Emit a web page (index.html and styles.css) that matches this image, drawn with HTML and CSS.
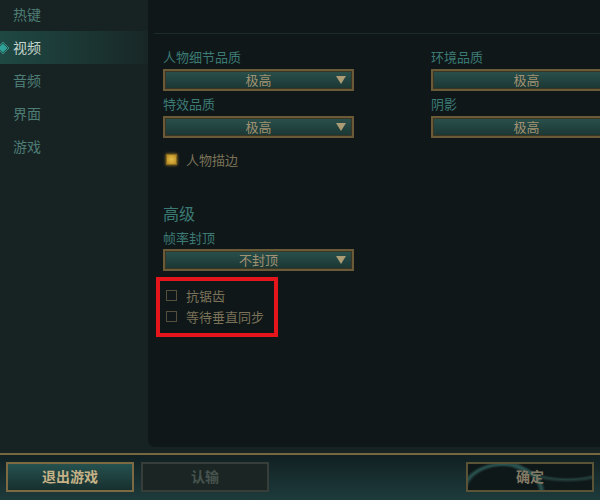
FILE: index.html
```html
<!DOCTYPE html>
<html lang="zh-CN">
<head>
    <meta charset="UTF-8">
    <title>设置 - 视频</title>
    <link rel="stylesheet" href="styles.css">
</head>
<body>
    <div class="tela">
        <!-- menu lateral -->
        <ul class="menu">
            <li class="menu-item">热键</li>
            <li class="menu-item ativo">
                <svg class="marcador" width="10" height="14" viewBox="0 0 10 14">
                    <path d="M-3 7 L3 1 L9 7 L3 13 Z" fill="none" stroke="#3a8a84" stroke-width="1"/>
                    <path d="M-2 7 L3 2.5 L7.5 7 L3 11.5 Z" fill="#2fa397"/>
                </svg>
                视频
            </li>
            <li class="menu-item">音频</li>
            <li class="menu-item">界面</li>
            <li class="menu-item">游戏</li>
        </ul>

        <div class="painel">
            <div class="divisor"></div>

            <div class="colunas">
                <div class="campo">
                    <label class="rotulo">人物细节品质</label>
                    <div class="seletor"><span></span><span class="valor">极高</span><span class="seta"></span></div>
                </div>
                <div class="campo">
                    <label class="rotulo">环境品质</label>
                    <div class="seletor"><span></span><span class="valor">极高</span><span class="seta"></span></div>
                </div>
                <div class="campo">
                    <label class="rotulo">特效品质</label>
                    <div class="seletor"><span></span><span class="valor">极高</span><span class="seta"></span></div>
                </div>
                <div class="campo">
                    <label class="rotulo">阴影</label>
                    <div class="seletor"><span></span><span class="valor">极高</span><span class="seta"></span></div>
                </div>
            </div>

            <div class="opcao contorno">
                <span class="caixa marcada"></span>
                <span>人物描边</span>
            </div>

            <h3 class="titulo">高级</h3>
            <div class="campo campo-avancado">
                <label class="rotulo">帧率封顶</label>
                <div class="seletor"><span></span><span class="valor">不封顶</span><span class="seta"></span></div>
            </div>

            <div class="destaque">
                <div class="opcao">
                    <span class="caixa"></span>
                    <span>抗锯齿</span>
                </div>
                <div class="opcao">
                    <span class="caixa"></span>
                    <span>等待垂直同步</span>
                </div>
            </div>
        </div>
    </div>

    <div class="rodape">
        <button class="botao botao-sair">退出游戏</button>
        <button class="botao botao-desativado">认输</button>
        <button class="botao botao-confirmar">确定</button>
    </div>
</body>
</html>
```

FILE: styles.css
```css
/* base da pagina */
body {
    margin: 0;
    width: 600px;
    height: 500px;
    overflow: hidden;
    background-color: #172223;
    font-family: "Noto Sans CJK SC", "Noto Sans", sans-serif;
    display: flex;
    flex-direction: column;
}

.tela {
    display: flex;
    height: 447px;
    margin-bottom: 6px;
}

/* menu lateral */
.menu {
    list-style: none;
    margin: -2px 0 0 0;
    padding: 0;
    width: 148px;
    flex-shrink: 0;
}

.menu-item {
    height: 33px;
    line-height: 33px;
    padding-left: 13px;
    font-size: 14px;
    color: #4d7d75;
    display: flex;
    align-items: center;
    position: relative;
}

.menu-item.ativo {
    color: #c4d6ce;
    background: linear-gradient(to right, #1f4843 0%, #1c3a37 45%, #182726 100%);
}

.marcador {
    position: absolute;
    left: 0;
    top: 10px;
}

/* painel principal */
.painel {
    flex: 1;
    background-color: #0f1719;
    border-bottom-left-radius: 7px;
    overflow: hidden;
    padding-left: 15px;
}

.divisor {
    height: 1px;
    margin: 33px 0 0 -9px;
    background-color: #1b2a2a;
}

.colunas {
    display: grid;
    grid-template-columns: 191px 191px;
    column-gap: 77px;
    row-gap: 4px;
    margin-top: 14px;
}

.rotulo {
    display: block;
    font-size: 13px;
    line-height: 18px;
    color: #3c7a74;
    white-space: nowrap;
}

.seletor {
    margin-top: 3px;
    height: 18px;
    line-height: 16px;
    border: 2px solid #6a5a38;
    box-shadow: inset 0 0 0 1px #3b3524;
    background: linear-gradient(to bottom, #2a514d, #1b3633);
    display: grid;
    grid-template-columns: 1fr auto 1fr;
    align-items: center;
    font-size: 13px;
    color: #a09272;
}

.seta {
    justify-self: end;
    margin-right: 6px;
    width: 0;
    height: 0;
    border-left: 5px solid transparent;
    border-right: 5px solid transparent;
    border-top: 8px solid #ab9c75;
}

/* caixas de selecao */
.opcao {
    display: flex;
    align-items: center;
    height: 21px;
    font-size: 13px;
    color: #7a7258;
}

.contorno {
    margin-top: 10px;
    height: 22px;
}

.caixa {
    width: 9px;
    height: 9px;
    border: 1px solid #55503c;
    margin: 0 9px 0 3px;
}

.caixa.marcada {
    border-color: #8a6c22;
    background: radial-gradient(circle, #e2bd4c 0%, #c79a2c 70%, #a57c22 100%);
    box-shadow: 0 0 3px #b58a24;
}

.titulo {
    margin: 33px 0 0 0;
    font-size: 16px;
    font-weight: normal;
    line-height: 20px;
    color: #3c7a74;
}

.campo-avancado {
    width: 191px;
    margin-top: 6px;
}

.campo-avancado .seletor {
    margin-top: 2px;
}

/* marcacao vermelha */
.destaque {
    width: 111px;
    margin: 6px 0 0 -7px;
    padding: 4px 0 6px 3px;
    border: 4px solid #e4161c;
}

/* rodape */
.rodape {
    flex: 1;
    border-top: 2px solid #76673f;
    background: linear-gradient(to bottom, #112022, #1e3b3c);
    display: flex;
    gap: 7px;
    padding: 7px 6px 0 6px;
    align-items: flex-start;
}

.botao {
    width: 128px;
    height: 30px;
    line-height: 24px;
    font-family: "Noto Sans CJK SC", "Noto Sans", sans-serif;
    font-size: 14px;
    font-weight: bold;
    padding: 0 0 2px 0;
}

.botao-sair {
    border: 2px solid #7d6a42;
    background: linear-gradient(to bottom, #25514e, #17302f);
    color: #c6b286;
}

.botao-desativado {
    border: 2px solid #373e3a;
    background-color: #1b2624;
    color: #47534e;
}

.botao-confirmar {
    margin-left: auto;
    border: 2px solid #5b5335;
    background:
        radial-gradient(ellipse 50px 36px at 28% 110%, transparent 70%, #2a5552 78%, transparent 86%),
        radial-gradient(ellipse 70px 30px at 80% -30%, transparent 70%, #24403f 78%, transparent 88%),
        #0f1819;
    color: #837a64;
}
```
